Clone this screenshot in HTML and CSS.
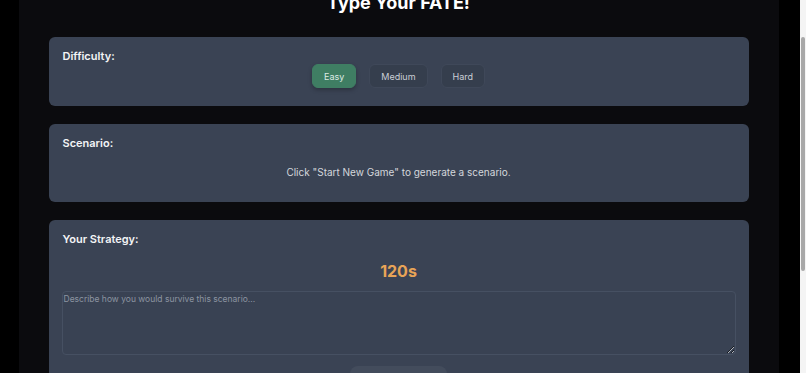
FILE: index.html
```html
<!DOCTYPE html>
<html lang="en">
<head>
    <meta charset="UTF-8">
    <meta name="viewport" content="width=device-width, initial-scale=1.0">
    <title>Type Your FATE!</title>
    <link rel="stylesheet" href="styles.css">
</head>
<body>
    <main class="game">
        <h1 class="title">Type Your FATE!</h1>

        <section class="card">
            <h2 class="card-label">Difficulty:</h2>
            <div class="difficulty">
                <button class="level active">Easy</button>
                <button class="level">Medium</button>
                <button class="level">Hard</button>
            </div>
        </section>

        <section class="card">
            <h2 class="card-label">Scenario:</h2>
            <p class="scenario">Click "Start New Game" to generate a scenario.</p>
        </section>

        <section class="card">
            <h2 class="card-label">Your Strategy:</h2>
            <div class="timer">120s</div>
            <textarea class="strategy" placeholder="Describe how you would survive this scenario..."></textarea>
            <div class="actions">
                <button class="submit">Submit Strategy</button>
            </div>
        </section>
    </main>
    <div class="scrollbar"><div class="thumb"></div></div>
</body>
</html>
```

FILE: styles.css
```css
/* General Styles */
body {
    background: #000;
    font-family: Inter, "Noto Sans", sans-serif;
    margin: 0;
    padding: 0 9px 0 0;
    overflow: hidden;
}

.game {
    width: 700px;
    margin: 0 auto;
    padding: 0 30px 40px;
    background: #0b0b0e;
    min-height: 400px;
}

.title {
    margin: -11px 0 20px;
    font-size: 18px;
    line-height: 28px;
    font-weight: 700;
    color: #fff;
    text-align: center;
}

.card {
    background: #3a4354;
    border-radius: 6px;
    padding: 12px 13px 18px;
    margin-bottom: 18px;
}

.card-label {
    margin: 0;
    padding-left: 1px;
    font-size: 11px;
    line-height: 15px;
    font-weight: 600;
    color: #f3f4f6;
}

.difficulty {
    display: flex;
    justify-content: center;
    gap: 13px;
}

.level {
    height: 24px;
    padding: 0 11px;
    border: 1px solid #3f4859;
    border-radius: 6px;
    background: #353e4d;
    color: #c9ced6;
    font-family: inherit;
    font-size: 9px;
}

.level.active {
    background: #3f7e63;
    border-color: #3f7e63;
    color: #dceae3;
    box-shadow: 0 2px 4px rgba(0, 0, 0, 0.25);
}

.scenario {
    margin: 11px 0 2px;
    font-size: 10px;
    line-height: 20px;
    color: #d4d7dc;
    text-align: center;
}

.timer {
    margin-top: 13px;
    font-size: 16px;
    line-height: 22px;
    font-weight: 700;
    color: #e8a457;
    text-align: center;
}

.strategy {
    display: block;
    box-sizing: border-box;
    width: 100%;
    height: 64px;
    margin-top: 9px;
    padding: 2px 1px;
    border: 1px solid #465062;
    border-radius: 4px;
    background: #394253;
    color: #d4d7dc;
    font-family: inherit;
    font-size: 8.5px;
    resize: vertical;
}

.strategy::placeholder {
    color: #8c94a1;
}

.actions {
    display: flex;
    justify-content: center;
    margin-top: 11px;
}

.submit {
    width: 97px;
    height: 28px;
    border: none;
    border-radius: 8px;
    background: #434c5c;
    color: #e5e7eb;
    font-family: inherit;
    font-size: 10px;
}

.scrollbar {
    position: fixed;
    top: 0;
    right: 0;
    width: 6px;
    height: 100%;
    background: #f4f4f4;
}

.thumb {
    margin: 37px 1px 0 1px;
    height: 234px;
    background: #a8a8a8;
    border-radius: 2px;
}
```
